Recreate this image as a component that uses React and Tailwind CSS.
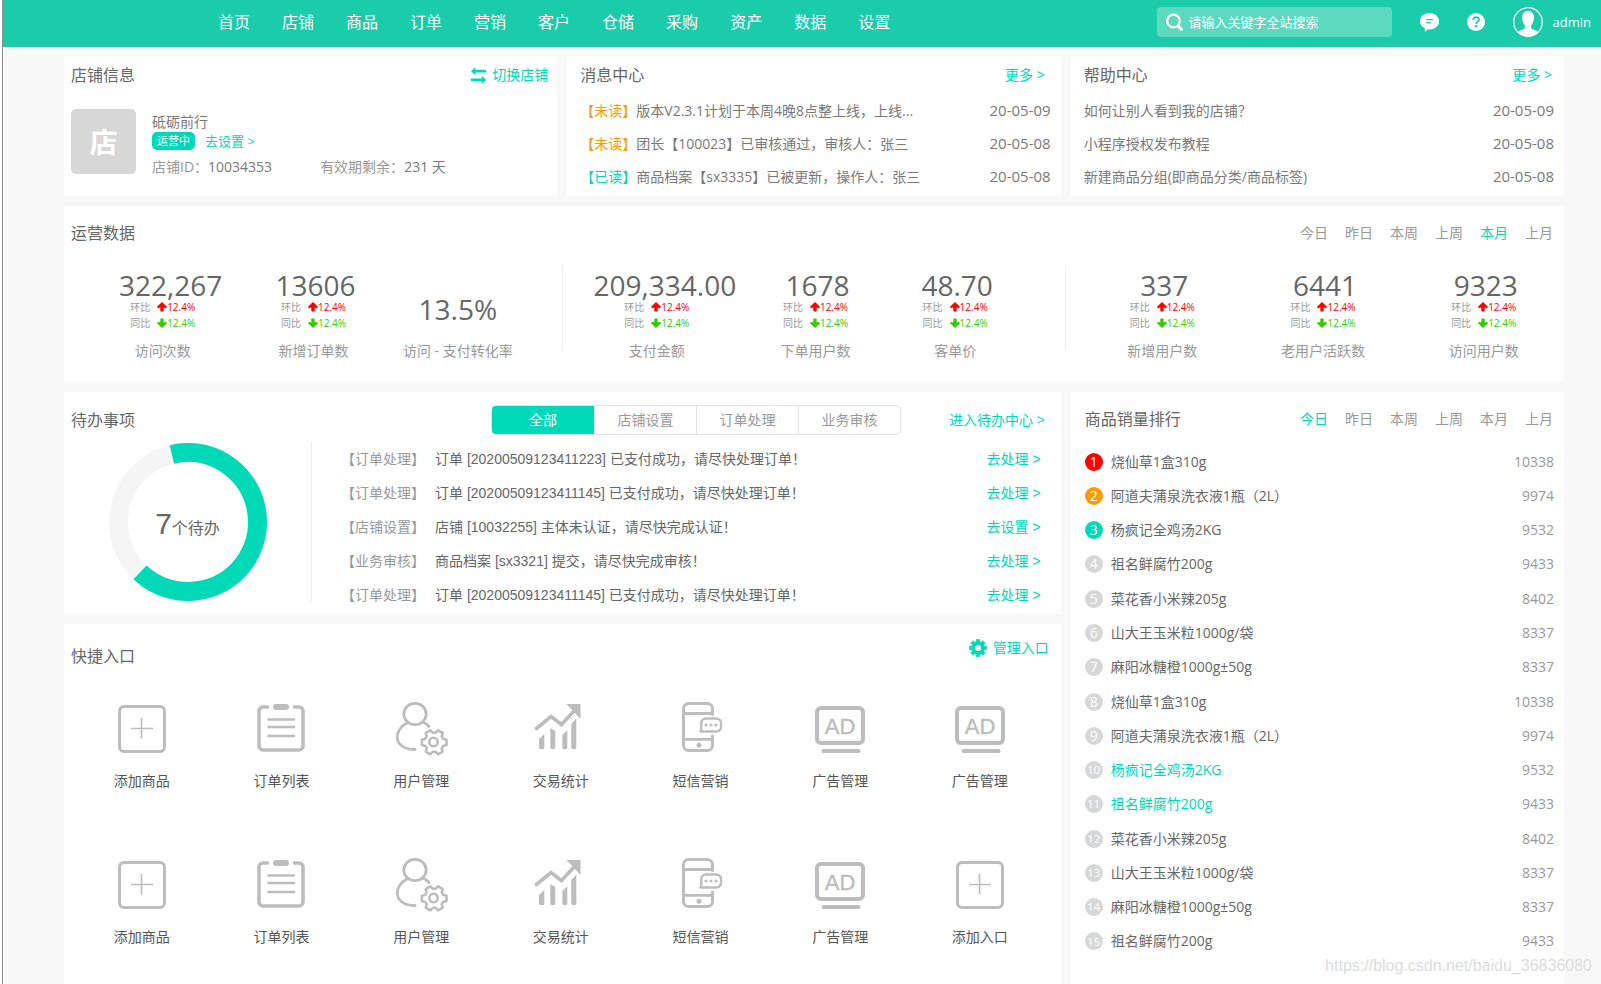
import { useState } from "react";

const NAV = ["首页", "店铺", "商品", "订单", "营销", "客户", "仓储", "采购", "资产", "数据", "设置"];
const PERIODS = ["今日", "昨日", "本周", "上周", "本月", "上月"];
const TODO_TABS = ["全部", "店铺设置", "订单处理", "业务审核"];

const MESSAGES = [
  { read: false, text: "版本V2.3.1计划于本周4晚8点整上线，上线...", date: "20-05-09" },
  { read: false, text: "团长【100023】已审核通过，审核人：张三", date: "20-05-08" },
  { read: true, text: "商品档案【sx3335】已被更新，操作人：张三", date: "20-05-08" },
];

const HELP = [
  { text: "如何让别人看到我的店铺？", date: "20-05-09" },
  { text: "小程序授权发布教程", date: "20-05-08" },
  { text: "新建商品分组(即商品分类/商品标签)", date: "20-05-08" },
];

const STAT_GROUPS = [
  {
    cols: "pl-[22px] pr-[34px] grid-cols-[153fr_148fr_140fr]",
    items: [
      { value: "322,267", label: "访问次数", wide: true },
      { value: "13606", label: "新增订单数" },
      { value: "13.5%", label: "访问 - 支付转化率", plain: true },
    ],
  },
  {
    cols: "pl-[10px] pr-[45px] grid-cols-[168fr_150fr_130fr]",
    items: [
      { value: "209,334.00", label: "支付金额", wide: true },
      { value: "1678", label: "下单用户数" },
      { value: "48.70", label: "客单价" },
    ],
  },
  {
    cols: "pl-4 grid-cols-3",
    items: [
      { value: "337", label: "新增用户数" },
      { value: "6441", label: "老用户活跃数" },
      { value: "9323", label: "访问用户数" },
    ],
  },
];

const TODOS = [
  { type: "【订单处理】", text: "订单 [20200509123411223] 已支付成功，请尽快处理订单！", action: "去处理" },
  { type: "【订单处理】", text: "订单 [20200509123411145] 已支付成功，请尽快处理订单！", action: "去处理" },
  { type: "【店铺设置】", text: "店铺 [10032255] 主体未认证，请尽快完成认证！", action: "去设置" },
  { type: "【业务审核】", text: "商品档案 [sx3321] 提交，请尽快完成审核！", action: "去处理" },
  { type: "【订单处理】", text: "订单 [20200509123411145] 已支付成功，请尽快处理订单！", action: "去处理" },
];

const RANKING = [
  { name: "烧仙草1盒310g", sales: 10338 },
  { name: "阿道夫蒲泉洗衣液1瓶（2L）", sales: 9974 },
  { name: "杨疯记全鸡汤2KG", sales: 9532 },
  { name: "祖名鲜腐竹200g", sales: 9433 },
  { name: "菜花香小米辣205g", sales: 8402 },
  { name: "山大王玉米粒1000g/袋", sales: 8337 },
  { name: "麻阳冰糖橙1000g±50g", sales: 8337 },
  { name: "烧仙草1盒310g", sales: 10338 },
  { name: "阿道夫蒲泉洗衣液1瓶（2L）", sales: 9974 },
  { name: "杨疯记全鸡汤2KG", sales: 9532, active: true },
  { name: "祖名鲜腐竹200g", sales: 9433, active: true },
  { name: "菜花香小米辣205g", sales: 8402 },
  { name: "山大王玉米粒1000g/袋", sales: 8337 },
  { name: "麻阳冰糖橙1000g±50g", sales: 8337 },
  { name: "祖名鲜腐竹200g", sales: 9433 },
];

const RANK_COLORS = ["bg-[#ff0000]", "bg-[#ff9900]", "bg-[#00d9b8]"];

// closed gear outline, `teeth` teeth around (cx, cy)
function gearPath(cx, cy, teeth, outer, inner, tip, root) {
  const step = 360 / teeth;
  const pt = (r, deg) => {
    const a = (deg * Math.PI) / 180;
    return `${(cx + r * Math.cos(a)).toFixed(2)} ${(cy + r * Math.sin(a)).toFixed(2)}`;
  };
  const pts = [];
  for (let i = 0; i < teeth; i++) {
    const a = i * step;
    pts.push(pt(inner, a - root), pt(outer, a - tip), pt(outer, a + tip), pt(inner, a + root));
  }
  return `M${pts.join("L")}Z`;
}

function PlusIcon() {
  return (
    <>
      <rect x="5.5" y="4.5" width="45" height="45" rx="4.5" strokeWidth="3" />
      <path d="M17 26.5H39M27.5 16V36.5" strokeWidth="1.6" />
    </>
  );
}

function ListIcon() {
  return (
    <>
      <path d="M14.5 5H10a4 4 0 0 0-4 4v35a4 4 0 0 0 4 4h36a4 4 0 0 0 4-4V9a4 4 0 0 0-4-4h-4.500" strokeWidth="3.6" strokeLinecap="round" />
      <rect x="20" y="2" width="16" height="6" rx="3" fill="#bdbdbd" stroke="none" />
      <path d="M15.500 17.500H41M15.500 25H41M15.500 34H41" strokeWidth="2.600" strokeLinecap="round" />
    </>
  );
}

function UserIcon() {
  return (
    <>
      <ellipse cx="22" cy="12" rx="11.200" ry="10.700" strokeWidth="2.800" />
      <path d="M14 21C7.500 24.500 4.300 30 4.300 35.500C4.300 43 12 47.500 22 47.500M29.500 20Q33.500 21.500 36 24.500" strokeWidth="2.800" strokeLinecap="round" />
      <path d={gearPath(41.2, 40.3, 6, 12.6, 9.6, 12, 22)} strokeWidth="2.600" strokeLinejoin="round" />
      <circle cx="40.500" cy="40" r="4.200" strokeWidth="2.600" />
    </>
  );
}

function ChartIcon() {
  return (
    <>
      <path d="M3.500 26.500L18 14.500L28.500 22.500L42 8" strokeWidth="3.600" strokeLinecap="round" strokeLinejoin="miter" />
      <path d="M33.500 2H47.500V17Z" fill="#bdbdbd" stroke="none" />
      <path
        d="M6 37L11.300 32V45.500q0 1.500-1.500 1.500H7.500q-1.500 0-1.500-1.500ZM17.300 26L22.300 29V45.500q0 1.500-1.500 1.500H18.800q-1.500 0-1.500-1.500ZM29.300 33L34.300 28.500V45.500q0 1.500-1.500 1.500H30.800q-1.500 0-1.500-1.500ZM38.300 22L43.300 16.500V45.500q0 1.500-1.500 1.500H39.800q-1.500 0-1.500-1.500Z"
        fill="#bdbdbd"
        stroke="none"
      />
    </>
  );
}

function SmsIcon() {
  return (
    <>
      <path d="M40.500 12.500V6.500a5 5 0 0 0-5-5h-19a5 5 0 0 0-5 5v37a5 5 0 0 0 5 5h19a5 5 0 0 0 5-5V34" strokeWidth="3" strokeLinecap="round" />
      <path d="M11.500 11.500H40.500M11.500 37.300H40.500" strokeWidth="2.800" />
      <circle cx="27" cy="43.200" r="2.500" fill="#bdbdbd" stroke="none" />
      <path d="M28.500 29.500Q29.500 28 29.300 25V21a4.500 4.500 0 0 1 4.500-4.500H44.500a4.500 4.500 0 0 1 4.500 4.500V25a4.500 4.500 0 0 1-4.500 4.500Z" strokeWidth="2.400" strokeLinejoin="round" />
      <g fill="#bdbdbd" stroke="none">
        <circle cx="34" cy="23" r="1.600" />
        <circle cx="39" cy="23" r="1.600" />
        <circle cx="44" cy="23" r="1.600" />
      </g>
    </>
  );
}

function AdIcon() {
  return (
    <>
      <rect x="5" y="6" width="46" height="35" rx="4" strokeWidth="4" />
      <path d="M11.500 49H46.500" strokeWidth="4" strokeLinecap="round" />
      <text x="28" y="32" textAnchor="middle" fontSize="22" fontFamily="Liberation Sans, sans-serif" fill="#bdbdbd" stroke="#bdbdbd" strokeWidth=".4">AD</text>
    </>
  );
}

const SHORTCUTS = [
  { label: "添加商品", icon: PlusIcon },
  { label: "订单列表", icon: ListIcon },
  { label: "用户管理", icon: UserIcon },
  { label: "交易统计", icon: ChartIcon },
  { label: "短信营销", icon: SmsIcon },
  { label: "广告管理", icon: AdIcon },
  { label: "广告管理", icon: AdIcon },
  { label: "添加商品", icon: PlusIcon },
  { label: "订单列表", icon: ListIcon },
  { label: "用户管理", icon: UserIcon },
  { label: "交易统计", icon: ChartIcon },
  { label: "短信营销", icon: SmsIcon },
  { label: "广告管理", icon: AdIcon },
  { label: "添加入口", icon: PlusIcon },
];

function Title({ children }) {
  return <h2 className="text-base leading-6 text-[#666]">{children}</h2>;
}

function Trend({ label, up }) {
  return (
    <div className="flex h-4 items-center text-[10px] leading-4">
      <span className="mr-[7px] text-[#999]">{label}</span>
      <svg viewBox="0 0 10 10" className={up ? "size-[10px] fill-[#ff0000]" : "size-[10px] rotate-180 fill-[#33cc00]"} aria-hidden="true">
        <path d="M5 0L9.700 4.500Q10 5 9.600 5.600Q9 6.400 8.300 6L6.700 5.500V8.800Q6.700 9.600 6 9.600H4Q3.300 9.600 3.300 8.800V5.500L1.700 6Q1 6.400 .4 5.600Q0 5 .3 4.500Z" />
      </svg>
      <span className={up ? "text-[#ff0000]" : "text-[#33cc00]"}>12.4%</span>
    </div>
  );
}

function Stat({ value, label, plain, wide }) {
  return (
    <div className="flex flex-col items-center">
      <div className="flex h-[60px] flex-col items-center justify-end">
        <div className={`text-[28px] leading-7 text-[#666] ${plain ? "pb-2" : wide ? "pl-4" : "pl-1"}`}>{value}</div>
        {plain ? null : (
          <>
            <Trend label="环比" up />
            <Trend label="同比" />
          </>
        )}
      </div>
      <div className="mt-[10px] text-sm text-[#999]">{label}</div>
    </div>
  );
}

function PeriodTabs({ initial }) {
  const [active, setActive] = useState(initial);
  return (
    <div className="flex gap-[17px] text-sm">
      {PERIODS.map((p) => (
        <button key={p} type="button" onClick={() => setActive(p)} className={p === active ? "text-[#00d9b8]" : "text-[#999]"}>
          {p}
        </button>
      ))}
    </div>
  );
}

function Header() {
  return (
    <header className="flex h-[47px] items-center bg-[#1accaa] pr-[10px] pb-[3px] pl-[215px] text-white">
      <nav className="flex gap-8 text-base leading-6">
        {NAV.map((n) => (
          <a key={n} href="#">{n}</a>
        ))}
      </nav>
      <div className="ml-auto flex items-center gap-7">
        <label className="flex h-[30px] w-[235px] items-center gap-1.5 rounded bg-[#5dd9c0] pl-[9px]">
          <svg viewBox="0 0 17 18" className="h-[18px] w-[17px] shrink-0" fill="none" stroke="currentColor" aria-hidden="true">
            <circle cx="7.500" cy="8" r="6.300" strokeWidth="2.200" />
            <path d="M12 13L15.500 16.500" strokeWidth="3" strokeLinecap="round" />
          </svg>
          <input type="text" aria-label="搜索" placeholder="请输入关键字全站搜索" className="w-full min-w-0 bg-transparent text-[13px] leading-5 outline-none placeholder:text-white" />
        </label>
        <button type="button" aria-label="消息">
          <svg viewBox="0 0 19 19" className="size-[19px]" aria-hidden="true">
            <path d="M9.500 0C15 0 19 3.600 19 8.200S15 16.400 9.500 16.400Q8.600 16.400 7.800 16.200L4.800 19V15.200C1.900 13.800 0 11.200 0 8.200C0 3.600 4 0 9.500 0Z" fill="#fff" />
            <path d="M6.200 6.700H12.800M6.200 9.800H11" stroke="#1accaa" strokeWidth="1.300" />
          </svg>
        </button>
        <button type="button" aria-label="帮助">
          <svg viewBox="0 0 18 18" className="size-[18px]" aria-hidden="true">
            <circle cx="9" cy="9" r="9" fill="#fff" />
            <path d="M6.200 7C6.200 5.200 7.400 4.100 9.100 4.100S12 5.200 12 6.700C12 8.700 9.100 8.800 9.100 11" fill="none" stroke="#1accaa" strokeWidth="1.700" />
            <circle cx="9.100" cy="13.300" r="1.200" fill="#1accaa" />
          </svg>
        </button>
        <a href="#" className="flex items-center gap-[10px] text-[13px] leading-5">
          <svg viewBox="0 0 30 30" className="size-[30px]" aria-hidden="true">
            <circle cx="15" cy="15" r="14.300" fill="none" stroke="#fff" strokeWidth="1.300" />
            <path d="M15 4C19.200 4 21.200 7 20.900 11C20.700 14 19.800 16.500 18.200 18.200V21C18.800 22.800 23.800 23 25.500 25.200A14.300 14.300 0 0 1 4.500 25.200C6.200 23 11.200 22.800 11.800 21V18.200C10.200 16.500 9.300 14 9.100 11C8.800 7 10.800 4 15 4Z" fill="#fff" />
          </svg>
          admin
        </a>
      </div>
    </header>
  );
}

function ShopCard() {
  return (
    <section className="bg-white pr-[9px] pb-[19px] pl-[7px]">
      <div className="flex h-[38px] items-center justify-between">
        <Title>店铺信息</Title>
        <a href="#" className="flex items-center gap-1.5 text-sm text-[#00d9b8]">
          <svg viewBox="0 0 15 17" className="h-[17px] w-[15px]" fill="currentColor" aria-hidden="true">
            <path d="M0 4.200L4.300 0V2.700H15V5.600H4.300V8.300ZM15 12.800L10.700 8.700V11.400H0V14.300H10.700V17Z" />
          </svg>
          切换店铺
        </a>
      </div>
      <div className="mt-[15px] flex gap-4">
        <div className="flex size-[65px] items-center justify-center rounded-[5px] bg-[#d7d7d7] text-[28px] font-bold text-white">店</div>
        <div className="pt-[3px] text-sm text-[#797979]">
          <div>砥砺前行</div>
          <div className="flex items-center gap-[10px]">
            <span className="h-[18px] rounded-[5px] bg-[#00d9b8] px-[5px] text-[11px] leading-[18px] text-white">运营中</span>
            <a href="#" className="text-[13px] text-[#00d9b8]">去设置 &gt;</a>
          </div>
          <div className="mt-1.5 flex gap-12">
            <div><span className="text-[#999]">店铺ID：</span>10034353</div>
            <div><span className="text-[#999]">有效期剩余：</span>231 天</div>
          </div>
        </div>
      </div>
    </section>
  );
}

function MessageCard() {
  return (
    <section className="bg-white pr-[10px] pl-[13px]">
      <div className="flex h-[38px] items-center justify-between pr-1.5">
        <Title>消息中心</Title>
        <a href="#" className="text-sm text-[#00d9b8]">更多 &gt;</a>
      </div>
      <ul className="text-sm text-[#797979]">
        {MESSAGES.map((m) => (
          <li key={m.text} className="flex h-[33px] items-center justify-between">
            <a href="#">
              <span className={m.read ? "text-[#00d9b8]" : "text-[#ff9900]"}>{m.read ? "【已读】" : "【未读】"}</span>
              {m.text}
            </a>
            <time className="text-[15px]">{m.date}</time>
          </li>
        ))}
      </ul>
    </section>
  );
}

function HelpCard() {
  return (
    <section className="bg-white pr-[10px] pl-[13px]">
      <div className="flex h-[38px] items-center justify-between pr-0.5">
        <Title>帮助中心</Title>
        <a href="#" className="text-sm text-[#00d9b8]">更多 &gt;</a>
      </div>
      <ul className="text-sm text-[#797979]">
        {HELP.map((h) => (
          <li key={h.text} className="flex h-[33px] items-center justify-between">
            <a href="#">{h.text}</a>
            <time className="text-[15px]">{h.date}</time>
          </li>
        ))}
      </ul>
    </section>
  );
}

function StatsCard() {
  return (
    <section className="bg-white pb-[21px]">
      <div className="flex h-[54px] items-center justify-between pr-[11px] pl-[7px]">
        <Title>运营数据</Title>
        <PeriodTabs initial="本月" />
      </div>
      <div className="mt-[5px] grid grid-cols-[498fr_503fr_499fr]">
        {STAT_GROUPS.map((g, i) => (
          <div key={i} className="flex items-start">
            {i > 0 ? <div className="h-[85px] w-px bg-[#eee]" /> : null}
            <div className={`grid flex-1 pt-1.5 ${g.cols}`}>
              {g.items.map((s) => (
                <Stat key={s.label} {...s} />
              ))}
            </div>
          </div>
        ))}
      </div>
    </section>
  );
}

function Donut({ percent }) {
  const r = 69.5;
  const len = 2 * Math.PI * r;
  return (
    <div className="relative mt-px size-[158px]">
      <svg viewBox="0 0 158 158" className="size-full" fill="none" strokeWidth="19" aria-hidden="true">
        <circle cx="79" cy="79" r={r} stroke="#f5f5f5" />
        <circle cx="79" cy="79" r={r} stroke="#00d9b8" strokeDasharray={`${len * percent} ${len}`} transform="rotate(-103.4 79 79)" />
      </svg>
      <div className="absolute inset-0 flex items-center justify-center pt-2 text-base text-[#666]">
        <div className="leading-8">
          <span className="font-['Liberation_Sans',sans-serif] text-3xl leading-8">7</span>个待办
        </div>
      </div>
    </div>
  );
}

function TodoCard() {
  const [tab, setTab] = useState(TODO_TABS[0]);
  return (
    <section className="bg-white pb-0.5">
      <div className="flex h-[50px] items-center pt-1.5 pr-4 pl-[7px]">
        <Title>待办事项</Title>
        <div className="mr-12 ml-auto flex overflow-hidden rounded-[5px] border border-[#e4e4e4] text-sm">
          {TODO_TABS.map((t, i) => (
            <button
              key={t}
              type="button"
              onClick={() => setTab(t)}
              className={`h-7 w-[102px] ${i > 0 ? "border-l border-[#e4e4e4]" : ""} ${t === tab ? "bg-[#00d9b8] text-white" : "text-[#999]"}`}
            >
              {t}
            </button>
          ))}
        </div>
        <a href="#" className="text-sm text-[#00d9b8]">进入待办中心 &gt;</a>
      </div>
      <div className="flex items-start">
        <div className="flex w-[247px] justify-center">
          <Donut percent={0.6575} />
        </div>
        <div className="h-40 w-px bg-[#eee]" />
        <ul className="flex-1 pr-5 pl-[29px] font-['Liberation_Sans','Noto_Sans_CJK_SC',sans-serif] text-sm">
          {TODOS.map((t, i) => (
            <li key={i} className="flex h-[34px] items-center">
              <span className="mr-[10px] text-[#999]">{t.type}</span>
              <span className="text-[#666]">{t.text}</span>
              <a href="#" className="ml-auto text-[#00d9b8]">{t.action} &gt;</a>
            </li>
          ))}
        </ul>
      </div>
    </section>
  );
}

function ShortcutCard() {
  return (
    <section className="flex-1 bg-white pt-3">
      <div className="flex items-start justify-between pr-3 pl-[7px]">
        <div className="pt-2">
          <Title>快捷入口</Title>
        </div>
        <a href="#" className="flex items-center gap-1.5 text-sm leading-6 text-[#00d9b8]">
          <svg viewBox="0 0 18 18" className="size-[18px]" aria-hidden="true">
            <path d={gearPath(9, 9, 8, 8.8, 6.6, 11, 15)} fill="currentColor" stroke="currentColor" strokeWidth=".5" strokeLinejoin="round" />
            <circle cx="9" cy="9" r="3" fill="#fff" />
          </svg>
          管理入口
        </a>
      </div>
      <div className="mt-[34px] grid grid-cols-7 gap-y-[67px] pr-[11px] pl-2">
        {SHORTCUTS.map(({ label, icon: Icon }, i) => (
          <a key={i} href="#" className="flex flex-col items-center text-sm text-[#555]">
            <svg viewBox="0 0 56 54" className="mb-[15px] h-[54px] w-14" fill="none" stroke="#bdbdbd" aria-hidden="true">
              <Icon />
            </svg>
            {label}
          </a>
        ))}
      </div>
    </section>
  );
}

function RankingCard() {
  return (
    <section className="bg-white pr-[10px] pl-[14px]">
      <div className="flex h-[53px] items-center justify-between pt-0.5 pr-px">
        <Title>商品销量排行</Title>
        <PeriodTabs initial="今日" />
      </div>
      <ol className="grid h-[514px] auto-rows-fr text-sm">
        {RANKING.map((r, i) => (
          <li key={i} className="flex items-center">
            <span className={`mr-2 flex size-[18px] items-center justify-center rounded-full text-white ${i > 8 ? "text-[11px]" : "text-sm"} ${RANK_COLORS[i] || "bg-[#d7d7d7]"}`}>
              {i + 1}
            </span>
            <a href="#" className={r.active ? "text-[#00d9b8]" : "text-[#666]"}>{r.name}</a>
            <span className="ml-auto text-[#999]">{r.sales}</span>
          </li>
        ))}
      </ol>
    </section>
  );
}

export default function App() {
  return (
    <div className="relative min-h-screen bg-white pl-0.5 font-['Open_Sans','Noto_Sans_CJK_SC',sans-serif] leading-5">
      <div className="flex min-h-screen flex-col border-l border-[#8c8c8c] bg-[#f8f8f8]">
        <Header />
        <main className="flex flex-1 flex-col gap-[10px] pt-[9px] pr-[37px] pl-[61px]">
          <div className="grid grid-cols-3 gap-[10px]">
            <ShopCard />
            <MessageCard />
            <HelpCard />
          </div>
          <StatsCard />
          <div className="grid flex-1 grid-cols-3 gap-[10px]">
            <div className="col-span-2 flex flex-col gap-[10px]">
              <TodoCard />
              <ShortcutCard />
            </div>
            <RankingCard />
          </div>
        </main>
      </div>
      <div className="pointer-events-none absolute right-[9px] bottom-2 font-['Liberation_Sans',sans-serif] text-base leading-5 text-[#dcdcdc] [text-shadow:1px_1px_0_#fff]">
        https://blog.csdn.net/baidu_36836080
      </div>
    </div>
  );
}
